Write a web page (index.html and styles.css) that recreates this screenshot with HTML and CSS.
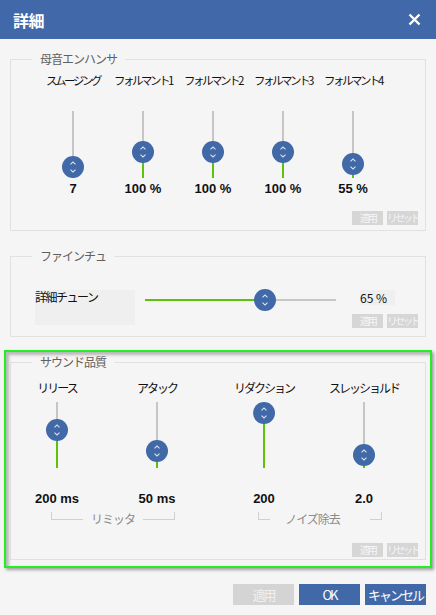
FILE: index.html
```html
<!DOCTYPE html>
<html lang="ja">
<head>
  <meta charset="UTF-8" />
  <title>詳細</title>
  <link rel="stylesheet" href="styles.css">
</head>
<body>
  <header class="titlebar">
    <h1>詳細</h1>
    <svg class="close" width="13" height="13" viewBox="0 0 13 13">
      <path d="M1.5 1.5 L11.5 11.5 M11.5 1.5 L1.5 11.5" stroke="#fff" stroke-width="2.4" fill="none"/>
    </svg>
  </header>

  <main class="content">
    <fieldset class="group">
      <legend>母音エンハンサ</legend>
      <div class="vcols">
        <div class="vcol">
          <div class="vlabel">スムージング</div>
          <div class="vslider tall"><span class="fill" style="height: 11px;"></span><span class="thumb" style="top: 45px;"></span></div>
          <div class="value">7</div>
        </div>
        <div class="vcol">
          <div class="vlabel">フォルマント1</div>
          <div class="vslider tall"><span class="fill" style="height: 26px;"></span><span class="thumb" style="top: 30px;"></span></div>
          <div class="value">100 %</div>
        </div>
        <div class="vcol">
          <div class="vlabel">フォルマント2</div>
          <div class="vslider tall"><span class="fill" style="height: 26px;"></span><span class="thumb" style="top: 30px;"></span></div>
          <div class="value">100 %</div>
        </div>
        <div class="vcol">
          <div class="vlabel">フォルマント3</div>
          <div class="vslider tall"><span class="fill" style="height: 26px;"></span><span class="thumb" style="top: 30px;"></span></div>
          <div class="value">100 %</div>
        </div>
        <div class="vcol">
          <div class="vlabel">フォルマント4</div>
          <div class="vslider tall"><span class="fill" style="height: 14px;"></span><span class="thumb" style="top: 42px;"></span></div>
          <div class="value">55 %</div>
        </div>
      </div>
      <div class="mini-btns first">
        <button>適用</button>
        <button>リセット</button>
      </div>
    </fieldset>

    <fieldset class="group group-tune">
      <legend>ファインチュ</legend>
      <div class="tune-row">
        <div class="tune-label">詳細チューン</div>
        <div class="tune-side">
          <div class="tune-top">
            <div class="hslider"><span class="fill" style="width: 120px;"></span><span class="thumb" style="left: 109px;"></span></div>
            <div class="tune-value">65 %</div>
          </div>
          <div class="mini-btns">
            <button>適用</button>
            <button>リセット</button>
          </div>
        </div>
      </div>
    </fieldset>

    <div class="highlight">
      <fieldset class="group group-sound">
        <legend>サウンド品質</legend>
        <div class="qpairs">
          <div class="qpair">
            <div class="qcols">
              <div class="vcol">
                <div class="vlabel">リリース</div>
                <div class="vslider short"><span class="fill" style="height: 38px;"></span><span class="thumb" style="top: 17px;"></span></div>
                <div class="value">200 ms</div>
              </div>
              <div class="vcol">
                <div class="vlabel">アタック</div>
                <div class="vslider short"><span class="fill" style="height: 17px;"></span><span class="thumb" style="top: 38px;"></span></div>
                <div class="value">50 ms</div>
              </div>
            </div>
            <div class="bracket">
              <span class="bline left"></span>
              <span class="tag">リミッタ</span>
              <span class="bline right"></span>
            </div>
          </div>
          <div class="qpair">
            <div class="qcols">
              <div class="vcol">
                <div class="vlabel">リダクション</div>
                <div class="vslider short"><span class="fill" style="height: 55px;"></span><span class="thumb" style="top: 0px;"></span></div>
                <div class="value">200</div>
              </div>
              <div class="vcol">
                <div class="vlabel">スレッショルド</div>
                <div class="vslider short"><span class="fill" style="height: 13px;"></span><span class="thumb" style="top: 42px;"></span></div>
                <div class="value">2.0</div>
              </div>
            </div>
            <div class="bracket wide">
              <span class="bline left"></span>
              <span class="tag">ノイズ除去</span>
              <span class="bline right"></span>
            </div>
          </div>
        </div>
        <div class="mini-btns last">
          <button>適用</button>
          <button>リセット</button>
        </div>
      </fieldset>
    </div>

    <div class="dialog-btns">
      <button class="btn disabled">適用</button>
      <button class="btn">OK</button>
      <button class="btn">キャンセル</button>
    </div>
  </main>
</body>
</html>
```

FILE: styles.css
```css
body {
  margin: 0;
  width: 436px;
  height: 615px;
  overflow: hidden;
  background-color: #f5f5f5;
  font-family: "Noto Sans CJK JP", "Noto Sans", sans-serif;
  font-size: 12px;
  color: #111;
}
.titlebar {
  height: 39px;
  background-color: #4169a9;
  color: white;
  display: flex;
  align-items: center;
  justify-content: space-between;
  padding: 0 15px 0 13px;
}
.titlebar h1 {
  margin: 0;
  font-size: 16px;
  line-height: 20px;
  font-weight: bold;
  letter-spacing: -0.5px;
}
.content {
  padding: 13px 10px 0;
}
.group {
  margin: 0;
  padding: 0 7px 5px 0;
  border: 1px solid #e1e1e1;
  min-width: 0;
}
.group legend {
  margin-left: 21px;
  padding: 0 8px;
  font-size: 12px;
  line-height: 14px;
  color: #606060;
  letter-spacing: -1px;
}
.vcols {
  display: grid;
  grid-template-columns: repeat(5, 70px);
  margin-left: 27px;
  padding-top: 7px;
}
.vcol {
  display: flex;
  flex-direction: column;
  align-items: center;
}
.vlabel {
  font-size: 11.5px;
  line-height: 14px;
  letter-spacing: -2.5px;
  white-space: nowrap;
}
.vslider {
  position: relative;
  width: 22px;
}
.vslider.tall {
  height: 67px;
  margin-top: 24px;
}
.vslider.short {
  height: 66px;
  margin-top: 7px;
}
.vslider::before {
  content: "";
  position: absolute;
  left: 10px;
  top: 0;
  bottom: 0;
  width: 2px;
  background-color: #c6c6c6;
}
.vslider .fill {
  position: absolute;
  left: 10px;
  bottom: 0;
  width: 2px;
  background-color: #5fc20a;
}
.thumb {
  position: absolute;
  left: 0;
  width: 22px;
  height: 22px;
  border-radius: 50%;
  background-color: #4169a8;
}
.thumb::before,
.thumb::after {
  content: "";
  position: absolute;
  left: 9px;
  width: 4px;
  height: 4px;
  box-sizing: border-box;
  border: 0 solid rgba(255, 255, 255, 0.85);
  transform: rotate(45deg);
}
.thumb::before {
  top: 6px;
  border-top-width: 1px;
  border-left-width: 1px;
}
.thumb::after {
  top: 12px;
  border-bottom-width: 1px;
  border-right-width: 1px;
}
.value {
  margin-top: 4px;
  font-family: "Liberation Sans", sans-serif;
  font-weight: bold;
  font-size: 13px;
  line-height: 14px;
  white-space: nowrap;
}
.mini-btns {
  display: flex;
  justify-content: flex-end;
  gap: 4px;
}
.mini-btns.first {
  margin-top: 15px;
}
.mini-btns.last {
  margin-top: 17px;
}
.mini-btns button {
  width: 31px;
  height: 14px;
  padding: 0;
  border: none;
  background-color: #d6d6d6;
  color: #f5f5f5;
  font-family: "Noto Sans CJK JP", sans-serif;
  font-size: 10.5px;
  line-height: 14px;
  letter-spacing: -2.8px;
  white-space: nowrap;
  overflow: hidden;
}

.group-tune {
  margin-top: 18px;
  padding-bottom: 8px;
}
.tune-row {
  display: flex;
  align-items: flex-start;
  margin: 27px 0 0 24px;
}
.tune-label {
  width: 100px;
  height: 35px;
  background-color: #efefef;
  line-height: 14px;
  letter-spacing: -1.5px;
}
.tune-side {
  flex: 1;
  display: flex;
  flex-direction: column;
  margin-left: 10px;
}
.tune-top {
  display: flex;
  align-items: flex-start;
  height: 15px;
}
.tune-side .mini-btns {
  margin-top: 9px;
}
.hslider {
  position: relative;
  width: 191px;
  height: 2px;
  margin-top: 9px;
  background-color: #c6c6c6;
}
.hslider .fill {
  position: absolute;
  left: 0;
  top: 0;
  height: 2px;
  background-color: #5fc20a;
}
.hslider .thumb {
  top: -10px;
}
.tune-value {
  margin-left: 24px;
  width: 35px;
  height: 15px;
  line-height: 15px;
  background-color: #efefef;
}

.highlight {
  margin: 13px -6px 0;
  padding: 3px 4px 6px;
  border: 2px solid #22ee22;
  box-shadow: inset 3px 3px 3px rgba(0, 0, 0, 0.25), 2px 2px 3px rgba(0, 0, 0, 0.35);
}
.group-sound {
  padding-bottom: 2px;
}
.qpairs {
  display: flex;
  gap: 27px;
  margin-left: 6px;
  padding-top: 12px;
}
.qpair {
  display: flex;
  flex-direction: column;
}
.qcols {
  display: grid;
  grid-template-columns: 80px 80px;
  column-gap: 20px;
}
.qcols .vlabel {
  font-size: 12px;
  letter-spacing: -2px;
}
.qcols .value {
  margin-top: 24px;
}
.bracket {
  display: flex;
  height: 14px;
  margin: 6px 22px 0 34px;
}
.bline {
  flex: 1;
  height: 7px;
  border-bottom: 1px solid #d0d0d0;
}
.bline.left {
  border-left: 1px solid #d0d0d0;
}
.bline.right {
  border-right: 1px solid #d0d0d0;
}
.tag {
  padding: 0 8px;
  line-height: 14px;
  color: #8a8a8a;
  letter-spacing: -1px;
}
.bracket.wide .tag {
  padding: 0 30px 0 15px;
}

.dialog-btns {
  display: flex;
  justify-content: flex-end;
  gap: 5px;
  margin-top: 16px;
}
.btn {
  width: 61px;
  height: 21px;
  padding: 0;
  border: none;
  background-color: #4169a8;
  color: white;
  font-family: "Noto Sans CJK JP", sans-serif;
  font-size: 13px;
  line-height: 21px;
  letter-spacing: -2px;
  white-space: nowrap;
}
.btn.disabled {
  background-color: #d4d4d4;
  color: #f0f0f0;
}
```
